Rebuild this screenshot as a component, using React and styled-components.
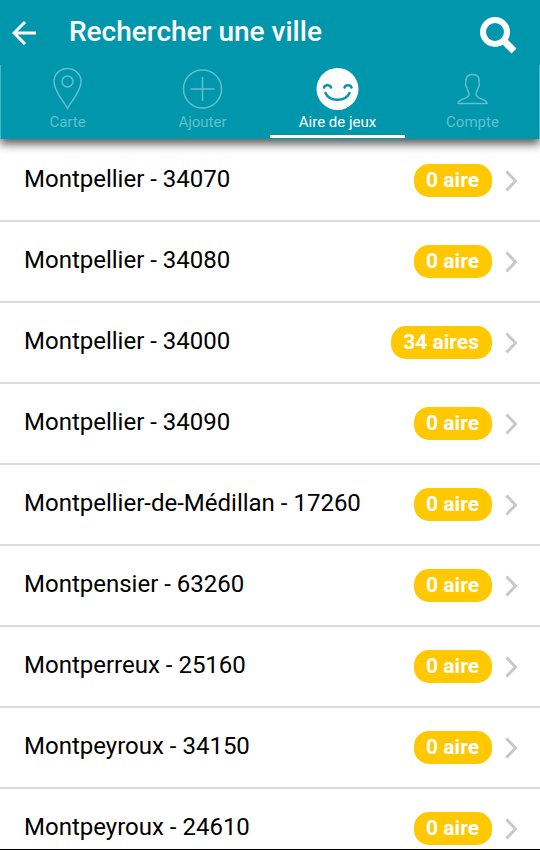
import React from "react";
import styled, { createGlobalStyle } from "styled-components";

const TEAL = "#0097ac";

const GlobalStyle = createGlobalStyle`
  *, *::before, *::after { box-sizing: border-box; }
  body {
    margin: 0;
    background: #fff;
    font-family: Roboto, "Liberation Sans", sans-serif;
  }
`;

const Screen = styled.div`
  display: flex;
  flex-direction: column;
  height: 100vh;
  overflow: hidden;
  border-bottom: 1px solid #000;
`;

const Header = styled.header`
  position: relative;
  z-index: 1;
  flex: none;
  background: ${TEAL};
  color: #fff;
  box-shadow: 0 5px 9px rgba(0, 0, 0, 0.65);
`;

const TitleBar = styled.div`
  display: flex;
  align-items: center;
  height: 65px;
  padding: 0 22px 0 12px;
`;

const IconButton = styled.button`
  display: flex;
  padding: 0;
  border: 0;
  background: none;
  color: inherit;
  cursor: pointer;
`;

const SearchButton = styled(IconButton)`
  padding-top: 7px;
`;

const Title = styled.h1`
  flex: 1;
  margin: 0;
  padding: 0 0 2px 32px;
  font-size: 28px;
  line-height: 36px;
  font-weight: 500;
`;

const Tabs = styled.nav`
  display: grid;
  grid-template-columns: repeat(4, 1fr);
  height: 74px;
  box-shadow: inset 1px 0 rgba(255, 255, 255, 0.3), inset -1px 0 rgba(255, 255, 255, 0.3);
`;

const Tab = styled.a`
  display: flex;
  flex-direction: column;
  align-items: center;
  border-bottom: 3px solid ${(p) => (p.$active ? "#fff" : "transparent")};
  margin-bottom: 1px;
  color: ${(p) => (p.$active ? "#fff" : "#62bfcb")};
  text-decoration: none;
`;

const TabIcon = styled.span`
  display: flex;
  height: 47px;
  padding-top: 2px;
`;

const TabLabel = styled.span`
  font-size: 15px;
  line-height: 20px;
`;

const CityList = styled.ul`
  flex: 1;
  min-height: 0;
  margin: 0;
  padding: 2px 0 0;
  overflow: hidden;
  list-style: none;
`;

const CityRow = styled.li`
  border-bottom: 2px solid #dcdcdc;
`;

const CityLink = styled.a`
  display: flex;
  align-items: center;
  height: 79px;
  padding: 0 22px 0 24px;
  color: #000;
  text-decoration: none;
`;

const CityName = styled.span`
  flex: 1;
  padding-bottom: 4px;
  font-size: 24px;
  line-height: 32px;
`;

const Badge = styled.span`
  padding: 0 13px 0 12px;
  margin-right: 13px;
  border-radius: 15px;
  background: #ffc800;
  color: #fff;
  font-size: 21px;
  line-height: 33px;
  font-weight: 700;
`;

const BackIcon = () => (
  <svg width="25" height="24" viewBox="0 0 25 24" fill="none" stroke="currentColor" strokeWidth="3" aria-hidden="true">
    <path d="M24 12H2M13 1L2 12l11 11" />
  </svg>
);

const SearchIcon = () => (
  <svg width="38" height="38" viewBox="0 0 38 38" fill="none" stroke="currentColor" aria-hidden="true">
    <circle cx="15" cy="15" r="12" strokeWidth="6" />
    <path d="M23 23l11 11" strokeWidth="7" />
  </svg>
);

const PinIcon = () => (
  <svg width="29" height="43" viewBox="0.500 0 29 43" fill="none" stroke="currentColor" strokeWidth="1.500" aria-hidden="true">
    <path d="M15 41.500C12 35 1.500 25 1.500 14.500a13.500 13 0 0 1 27 0C28.500 25 18 35 15 41.500z" />
    <circle cx="15" cy="14.500" r="5.500" />
  </svg>
);

const PlusIcon = () => (
  <svg width="41" height="44" viewBox="0.500 0 41 44" fill="none" stroke="currentColor" strokeWidth="1.500" aria-hidden="true">
    <circle cx="21" cy="22" r="19" />
    <path d="M21 10v24M9 22h24" />
  </svg>
);

const SmileIcon = () => (
  <svg width="43" height="44" viewBox="0.500 0 43 44" fill="none" aria-hidden="true">
    <circle cx="22" cy="22" r="21" fill="#fff" />
    <g stroke={TEAL} strokeWidth="2.500" strokeLinecap="round">
      <path d="M8.500 20.500c1-3 6-3 7 0M29 20.500c1-3 6-3 7 0" />
      <path d="M10 26c4 9 20 9 24 0" />
    </g>
  </svg>
);

const PersonIcon = () => (
  <svg width="31" height="44" viewBox="0.500 0 31 44" fill="none" stroke="currentColor" strokeWidth="1.500" strokeLinejoin="round" aria-hidden="true">
    <path d="M16 7.500c-5 0-7 3-6.500 7.500-1 2 0 5 1 6 .5 3 2 4 2 6 0 6-10.500 4-11 9.500h29c-.5-5.500-11-3.500-11-9.500 0-2 1.500-3 2-6 1-1 2-4 1-6 .5-4.500-1.500-7.500-6.500-7.500z" />
  </svg>
);

const Chevron = () => (
  <svg width="13" height="22" viewBox="0 0 13 22" fill="none" stroke="#c8c8c8" strokeWidth="3" aria-hidden="true">
    <path d="M1.500 1.500l9 9.500-9 9.500" />
  </svg>
);

const tabs = [
  { label: "Carte", Icon: PinIcon },
  { label: "Ajouter", Icon: PlusIcon },
  { label: "Aire de jeux", Icon: SmileIcon, active: true },
  { label: "Compte", Icon: PersonIcon },
];

const cities = [
  { name: "Montpellier", code: "34070", count: 0 },
  { name: "Montpellier", code: "34080", count: 0 },
  { name: "Montpellier", code: "34000", count: 34 },
  { name: "Montpellier", code: "34090", count: 0 },
  { name: "Montpellier-de-Médillan", code: "17260", count: 0 },
  { name: "Montpensier", code: "63260", count: 0 },
  { name: "Montperreux", code: "25160", count: 0 },
  { name: "Montpeyroux", code: "34150", count: 0 },
  { name: "Montpeyroux", code: "24610", count: 0 },
];

export default function App() {
  return (
    <Screen>
      <GlobalStyle />
      <Header>
        <TitleBar>
          <IconButton aria-label="Retour">
            <BackIcon />
          </IconButton>
          <Title>Rechercher une ville</Title>
          <SearchButton aria-label="Rechercher">
            <SearchIcon />
          </SearchButton>
        </TitleBar>
        <Tabs>
          {tabs.map(({ label, Icon, active }) => (
            <Tab key={label} href="#" $active={active} aria-current={active ? "page" : undefined}>
              <TabIcon>
                <Icon />
              </TabIcon>
              <TabLabel>{label}</TabLabel>
            </Tab>
          ))}
        </Tabs>
      </Header>
      <CityList>
        {cities.map(({ name, code, count }) => (
          <CityRow key={code}>
            <CityLink href="#">
              <CityName>{`${name} - ${code}`}</CityName>
              <Badge>{`${count} ${count > 1 ? "aires" : "aire"}`}</Badge>
              <Chevron />
            </CityLink>
          </CityRow>
        ))}
      </CityList>
    </Screen>
  );
}
